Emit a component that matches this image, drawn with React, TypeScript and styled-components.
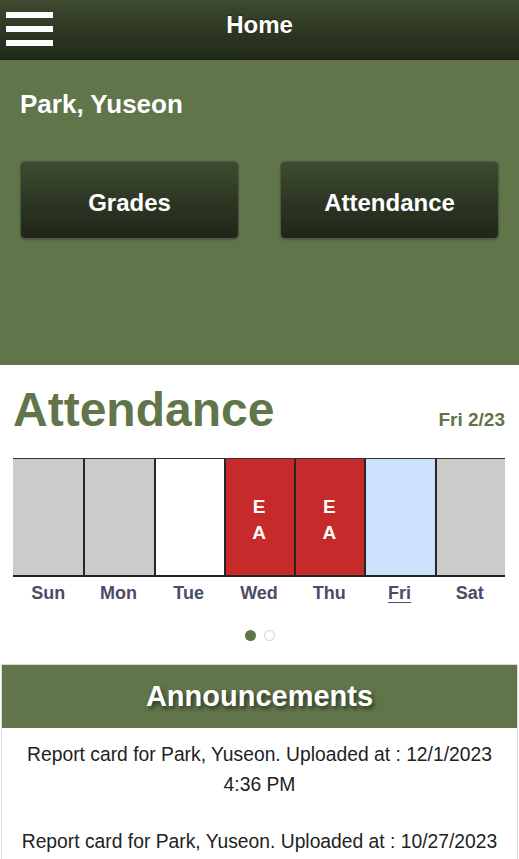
import styled, { createGlobalStyle } from "styled-components";

const GlobalStyle = createGlobalStyle`
    html, body{
        margin:0;
        padding:0;
        background:#fff;
        font-family:"Liberation Sans", Arial, sans-serif;
    }
`

const days = [
    { label: 'Sun', tone: 'off' },
    { label: 'Mon', tone: 'off' },
    { label: 'Tue', tone: 'plain' },
    { label: 'Wed', tone: 'absent', codes: ['E', 'A'] },
    { label: 'Thu', tone: 'absent', codes: ['E', 'A'] },
    { label: 'Fri', tone: 'today' },
    { label: 'Sat', tone: 'off' },
] as const;

const announcements = [
    'Report card for Park, Yuseon. Uploaded at : 12/1/2023 4:36 PM',
    'Report card for Park, Yuseon. Uploaded at : 10/27/2023 4:12 PM',
];

const cellColors: Record<string, string> = {
    off: '#cbcbcb',
    plain: '#ffffff',
    absent: '#c62a2a',
    today: '#cce1fb',
};

export default function App() {
    return <Page>
        <GlobalStyle/>
        <TopBar>
            <MenuButton aria-label="menu">
                <span/><span/><span/>
            </MenuButton>
            <TopTitle>Home</TopTitle>
            <div/>
        </TopBar>
        <Hero>
            <StudentName>Park, Yuseon</StudentName>
            <ButtonRow>
                <NavButton>Grades</NavButton>
                <NavButton>Attendance</NavButton>
            </ButtonRow>
        </Hero>
        <AttendanceSection>
            <TitleRow>
                <BigTitle>Attendance</BigTitle>
                <DateLabel>Fri 2/23</DateLabel>
            </TitleRow>
            <Week>
                {days.map((d, i) => (
                    <DayCell key={d.label} $bg={cellColors[d.tone]} $first={i === 0}>
                        {'codes' in d && d.codes.map(c => <span key={c}>{c}</span>)}
                    </DayCell>
                ))}
            </Week>
            <DayLabels>
                {days.map(d => (
                    <DayName key={d.label} $today={d.tone === 'today'}>{d.label}</DayName>
                ))}
            </DayLabels>
            <Dots>
                <Dot $active/>
                <Dot/>
            </Dots>
        </AttendanceSection>
        <Card>
            <CardHeader>Announcements</CardHeader>
            {announcements.map(a => <Entry key={a}>{a}</Entry>)}
        </Card>
    </Page>
}

const Page = styled.div`
    width:519px;
    height:859px;
    overflow:hidden;
    background:#fff;
`

const TopBar = styled.header`
    height:60px;
    display:grid;
    grid-template-columns:70px 1fr 70px;
    align-items:center;
    background:linear-gradient(to bottom, #3e4b2f 0%, #2d3623 55%, #22291b 100%);
    border-bottom:1px solid #1a1f14;
    box-sizing:border-box;
`

const MenuButton = styled.div`
    display:flex;
    flex-direction:column;
    gap:8px;
    padding-left:6px;
    margin-top:-2px;
    span{
        display:block;
        width:47px;
        height:6px;
        background:#fff;
    }
`

const TopTitle = styled.h1`
    margin:0;
    text-align:center;
    color:#fff;
    font-size:24px;
    font-weight:bold;
    text-shadow:0 -1px 1px rgba(0,0,0,0.4);
    margin-top:-10px;
`

const Hero = styled.section`
    height:305px;
    box-sizing:border-box;
    background:#61754a;
    padding:29px 20px 0;
`

const StudentName = styled.div`
    color:#fff;
    font-size:26px;
    line-height:30px;
    font-weight:bold;
`

const ButtonRow = styled.div`
    display:grid;
    grid-template-columns:1fr 1fr;
    gap:41px;
    margin-top:42px;
`

const NavButton = styled.button`
    height:78px;
    padding-top:6px;
    border-radius:5px;
    border:1px solid #4c5a3d;
    background:linear-gradient(to bottom, #3e4b30 0%, #2c3522 55%, #20261a 100%);
    color:#fff;
    font-family:"Liberation Sans", Arial, sans-serif;
    font-size:24px;
    font-weight:bold;
    box-shadow:0 1px 2px rgba(0,0,0,0.25);
    cursor:pointer;
`

const AttendanceSection = styled.section`
    padding:18px 14px 0 13px;
`

const TitleRow = styled.div`
    display:flex;
    justify-content:space-between;
    align-items:baseline;
`

const BigTitle = styled.h2`
    margin:0;
    color:#61754a;
    font-size:48px;
    line-height:54px;
    font-weight:bold;
`

const DateLabel = styled.span`
    color:#61754a;
    font-size:19px;
    font-weight:bold;
`

const Week = styled.div`
    display:grid;
    grid-template-columns:repeat(7, 1fr);
    margin-top:21px;
    height:119px;
    border-top:1px solid #333;
    border-bottom:2px solid #222;
    box-sizing:border-box;
`

const DayCell = styled.div<{ $bg: string; $first?: boolean }>`
    background:${p => p.$bg};
    border-left:${p => p.$first ? 'none' : '2px solid #262626'};
    display:flex;
    flex-direction:column;
    align-items:center;
    padding-top:35px;
    padding-right:2px;
    box-sizing:border-box;
    span{
        color:#fff;
        font-size:19px;
        line-height:26px;
        font-weight:bold;
    }
`

const DayLabels = styled.div`
    display:grid;
    grid-template-columns:repeat(7, 1fr);
    margin-top:6px;
`

const DayName = styled.span<{ $today?: boolean }>`
    text-align:center;
    color:#4a4c68;
    font-size:18px;
    line-height:20px;
    font-weight:bold;
    text-decoration:${p => p.$today ? 'underline' : 'none'};
    text-underline-offset:3px;
`

const Dots = styled.div`
    display:flex;
    justify-content:center;
    gap:8px;
    margin-top:27px;
    padding-left:1px;
`

const Dot = styled.span<{ $active?: boolean }>`
    width:11px;
    height:11px;
    border-radius:50%;
    box-sizing:border-box;
    background:${p => p.$active ? '#61754a' : '#fff'};
    border:${p => p.$active ? 'none' : '1.5px solid #cfcfcf'};
`

const Card = styled.section`
    margin:23px 1px 0 1px;
    border:1px solid #dcdcdc;
    border-bottom:none;
`

const CardHeader = styled.h3`
    margin:0;
    height:63px;
    display:flex;
    align-items:center;
    justify-content:center;
    background:#61754a;
    color:#fff;
    font-size:29px;
    font-weight:bold;
    text-shadow:2px 3px 4px rgba(0,0,0,0.55);
`

const Entry = styled.p`
    margin:0;
    padding:12px 16px 15px;
    text-align:center;
    color:#222;
    font-size:19.3px;
    line-height:30px;
`
